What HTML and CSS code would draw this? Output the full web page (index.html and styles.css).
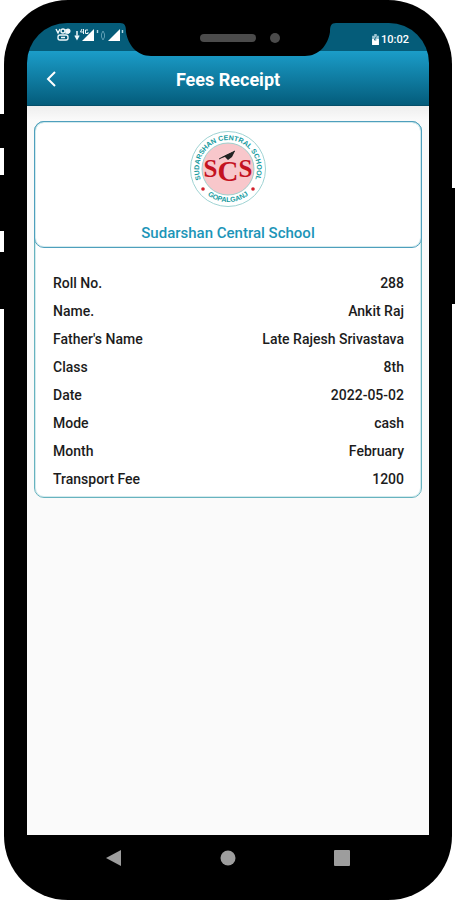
FILE: index.html
```html
<!DOCTYPE html>
<html lang="en">
<head>
  <meta charset="UTF-8">
  <meta name="viewport" content="width=device-width, initial-scale=1.0">
  <title>Fees Receipt</title>
  <link rel="stylesheet" href="styles.css">
</head>
<body>

  <div class="phone">
    <!-- Side keys -->
    <span class="key key-mute"></span>
    <span class="key key-up"></span>
    <span class="key key-down"></span>
    <span class="key key-power"></span>

    <div class="screen">
      <!-- Notch with speaker and camera -->
      <svg class="notch" viewBox="0 0 216 34" aria-hidden="true">
        <path d="M0 0C5 0 6 3 6 9C8 22 17 33 31 33H185C199 33 208 22 210 9C210 3 211 0 216 0Z" fill="#000"/>
        <rect x="80" y="11" width="56" height="8" rx="4" fill="#4b4b4b"/>
        <circle cx="155" cy="15" r="5" fill="#4b4b4b"/>
      </svg>

      <!-- Status bar -->
      <div class="status-bar">
        <svg class="status-icons" viewBox="0 0 72 16" aria-hidden="true">
          <g fill="none" stroke="#eef7fa" stroke-width="1.4">
            <path d="M1 2L3 6L5 2M11 2V6H14"/>
            <circle cx="8" cy="4" r="2"/>
            <rect x="3" y="8" width="10" height="5" rx="2"/>
            <path d="M6 10.500H10"/>
          </g>
          <circle cx="13" cy="4" r="2.500" fill="#eef7fa"/>
          <path d="M22 4V11M20 8.500L22 12L24 8.500" fill="none" stroke="#eef7fa" stroke-width="1.500"/>
          <path d="M39 2V14H27Z" fill="#fff"/>
          <path d="M27 2L25.500 5H29M28.500 2V7M33 3H30.500V6.500H33V5" fill="none" stroke="#eef7fa"/>
          <path d="M42.500 3V6" stroke="#b8dae5" stroke-width="1.400"/>
          <path d="M46.500 7L48 4L49.500 7V10L48 13L46.500 10Z" fill="none" stroke="#5c9db3"/>
          <path d="M65 2V14H53Z" fill="#fff"/>
          <path d="M67.500 3V6" stroke="#b8dae5" stroke-width="1.400"/>
        </svg>
        <div class="clock">
          <svg class="battery" viewBox="0 0 8 13" aria-hidden="true">
            <path d="M2.500 0H5.500V2H8V13H0V2H2.500Z" fill="#9ec6d3"/>
            <path d="M0 6H8V13H0Z" fill="#fff"/>
            <path d="M5 3L2.500 7H5" fill="none" stroke="#055c79"/>
          </svg>
          <span>10:02</span>
        </div>
      </div>

      <!-- Header -->
      <header class="header">
        <button class="back" type="button" aria-label="Back">
          <svg viewBox="0 0 12 18" aria-hidden="true">
            <path d="M10 2L3 9L10 16" fill="none" stroke="#fff" stroke-width="2"/>
          </svg>
        </button>
        <h1 class="title">Fees Receipt</h1>
      </header>

      <!-- Receipt -->
      <main class="content">
        <section class="receipt">
          <div class="school">
            <svg class="school-logo" viewBox="0 0 78 78" role="img" aria-label="Sudarshan Central School, Gopalganj">
              <defs>
                <path id="arcTop" d="M18.500 59.500A29 29 0 1 1 59.500 59.500"/>
                <path id="arcBottom" d="M9 54A34 34 0 0 0 69 54"/>
              </defs>
              <circle cx="39" cy="39" r="37.500" fill="#fff" stroke="#9fd3d3"/>
              <circle cx="39" cy="39" r="26" fill="#f8c7cb" stroke="#9fd0cd"/>
              <text class="logo-ring"><textPath href="#arcTop" startOffset="50%" text-anchor="middle">SUDARSHAN CENTRAL SCHOOL</textPath></text>
              <text class="logo-ring"><textPath href="#arcBottom" startOffset="50%" text-anchor="middle">GOPALGANJ</textPath></text>
              <circle cx="14" cy="59" r="1.800" fill="#d3202b"/>
              <circle cx="64" cy="59" r="1.800" fill="#d3202b"/>
              <text class="logo-letters" x="39" y="47" text-anchor="middle">S<tspan class="logo-mid" dy="4">C</tspan><tspan dy="-4">S</tspan></text>
              <path d="M31 28L37 25L46 21L43 27L39 30L36 27Z" fill="#222"/>
              <path d="M30 29L46 21" stroke="#222" stroke-width="1"/>
            </svg>
            <h2 class="school-name">Sudarshan Central School</h2>
          </div>

          <table class="details">
            <tbody>
              <tr><th scope="row">Roll No.</th><td>288</td></tr>
              <tr><th scope="row">Name.</th><td>Ankit Raj</td></tr>
              <tr><th scope="row">Father's Name</th><td>Late Rajesh Srivastava</td></tr>
              <tr><th scope="row">Class</th><td>8th</td></tr>
              <tr><th scope="row">Date</th><td>2022-05-02</td></tr>
              <tr><th scope="row">Mode</th><td>cash</td></tr>
              <tr><th scope="row">Month</th><td>February</td></tr>
              <tr><th scope="row">Transport Fee</th><td>1200</td></tr>
            </tbody>
          </table>
        </section>
      </main>

      <!-- Android navigation -->
      <nav class="nav-bar">
        <button type="button" aria-label="Go back">
          <svg viewBox="0 0 16 16" aria-hidden="true"><path d="M0 8L15 0V16Z" fill="#9d9d9d"/></svg>
        </button>
        <button type="button" aria-label="Home">
          <svg viewBox="0 0 16 16" aria-hidden="true"><circle cx="8" cy="8" r="7.500" fill="#9d9d9d"/></svg>
        </button>
        <button type="button" aria-label="Recent apps">
          <svg viewBox="0 0 16 16" aria-hidden="true"><rect width="16" height="16" rx="1" fill="#9d9d9d"/></svg>
        </button>
      </nav>
    </div>
  </div>

</body>
</html>
```

FILE: styles.css
```css
* {
  box-sizing: border-box;
}

body {
  margin: 0;
  font-family: Roboto, Arial, sans-serif;
  background-color: #ffffff;
  color: #1c1c1c;
}

button {
  display: flex;
  align-items: center;
  justify-content: center;
  padding: 0;
  border: 0;
  background: none;
  cursor: pointer;
}

/* Phone frame */
.phone {
  position: relative;
  display: flex;
  min-height: 100vh;
  margin: 0 3px 0 4px;
  padding: 23px;
  border-radius: 64px;
  background-color: #000000;
}

.key {
  position: absolute;
  left: -4px;
  width: 8px;
  background-color: #000000;
}

.key-mute {
  top: 114px;
  height: 34px;
}

.key-up {
  top: 175px;
  height: 56px;
}

.key-down {
  top: 252px;
  height: 57px;
}

.key-power {
  top: 188px;
  left: auto;
  right: -3px;
  height: 116px;
}

.screen {
  position: relative;
  flex: 1;
  display: flex;
  flex-direction: column;
  overflow: hidden;
  border-radius: 40px;
  background-color: #000000;
}

.notch {
  position: absolute;
  top: 0;
  left: 50%;
  width: 216px;
  height: 34px;
  transform: translateX(-50%);
}

/* Status bar */
.status-bar {
  display: flex;
  justify-content: space-between;
  align-items: center;
  height: 28px;
  padding: 0 20px 0 28px;
  background-color: #055c79;
}

.status-icons {
  width: 72px;
  height: 16px;
  margin-bottom: 4px;
}

.clock {
  display: flex;
  align-items: center;
  gap: 2px;
  padding-top: 4px;
  font-size: 11px;
  font-weight: 500;
  color: #ffffff;
}

.battery {
  width: 7px;
  height: 11px;
}

/* Header */
.header {
  display: grid;
  grid-template-columns: 48px 1fr 48px;
  align-items: center;
  height: 55px;
  padding-top: 2px;
  border-bottom: 1px solid #054f69;
  background: linear-gradient(#1b9dc9, #045c7b);
}

.back {
  height: 48px;
}

.back svg {
  width: 12px;
  height: 18px;
}

.title {
  margin: 0;
  font-size: 18px;
  font-weight: 700;
  text-align: center;
  color: #ffffff;
}

/* Receipt card */
.content {
  flex: 1;
  padding: 15px 7px;
  background: #fafafa linear-gradient(#eeeeee, #fafafa 14px);
}

.receipt {
  border: 1px solid #67b3bf;
  border-radius: 10px;
  box-shadow: inset 0 0 0 1px #d3eaed;
  background-color: #ffffff;
}

.school {
  display: flex;
  flex-direction: column;
  align-items: center;
  gap: 16px;
  margin: -1px;
  padding: 8px 8px 5px;
  border: 1px solid #4e9fbd;
  border-radius: 10px;
  box-shadow: inset 0 0 0 1px #d3eaed;
}

.school-logo {
  width: 78px;
  height: 78px;
}

.logo-ring {
  font-family: "Liberation Sans", Arial, sans-serif;
  font-size: 7px;
  font-weight: 700;
  fill: #149a9e;
}

.logo-letters {
  font-family: "Liberation Serif", "Times New Roman", serif;
  font-size: 25px;
  font-weight: 700;
  fill: #c4121f;
}

.logo-mid {
  font-size: 29px;
}

.school-name {
  margin: 0;
  font-size: 15px;
  font-weight: 500;
  line-height: 18px;
  color: #1c95b8;
}

.details {
  width: 100%;
  margin-top: 22px;
  padding: 0 17px 4px 18px;
  border-spacing: 0;
  font-size: 14px;
}

.details th,
.details td {
  height: 28px;
  padding: 0;
  font-weight: 500;
  text-align: left;
}

.details td {
  text-align: right;
}

/* Navigation bar */
.nav-bar {
  display: flex;
  height: 42px;
  padding: 4px 30px 0;
  background-color: #000000;
}

.nav-bar button {
  flex: 1;
}

.nav-bar svg {
  width: 16px;
  height: 16px;
}
```
